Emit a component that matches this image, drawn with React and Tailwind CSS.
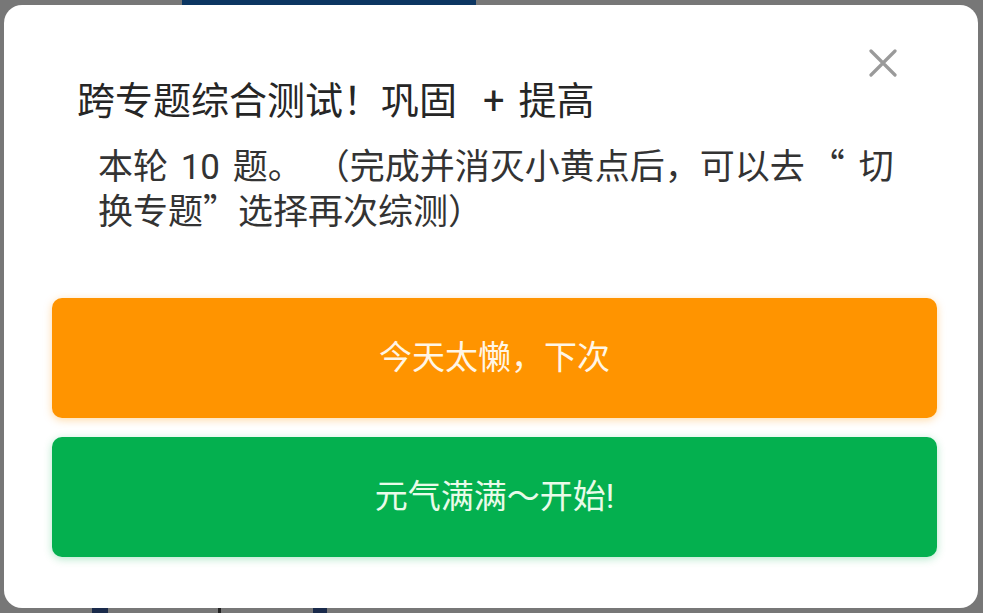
const cjk = "font-['Noto_Sans_CJK_SC',sans-serif] leading-[0]";

export default function App() {
  return (
    <div className="relative w-[983px] h-[613px] overflow-hidden bg-[#777777] font-['Roboto','Noto_Sans_CJK_SC',sans-serif] [text-spacing-trim:space-all]">
      {/* page underneath the dimmed overlay */}
      <div className="flex h-[5px]">
        <div className="w-[182px]" />
        <div className="w-[294px] bg-[#0c3662]" />
      </div>
      <div className="absolute bottom-0 left-0 flex h-[5px] w-full">
        <div className="w-[92px]" />
        <div className="w-[16px] bg-[#1a2a4a]" />
        <div className="w-[110px]" />
        <div className="w-[3px] bg-[#222]" />
        <div className="w-[92px]" />
        <div className="w-[14px] bg-[#1a2a4a]" />
      </div>

      {/* dialog */}
      <div className="absolute left-[4px] top-[5px] w-[974px] h-[603px] rounded-[18px] bg-white">
        <button className="absolute left-[865px] top-[44px] w-[28px] h-[28px] text-[#9a9a9a]">
          <svg viewBox="0 0 28 28" className="w-full h-full" fill="none" stroke="currentColor" strokeWidth="3.2" strokeLinecap="round">
            <path d="M2 2 L26 26 M26 2 L2 26" />
          </svg>
        </button>

        <div className="pt-[72px] pl-[73px] text-[38px] leading-[49px] text-[#262626]">
          跨专题综合测试！巩固<span className="ml-[26px] mr-[14px]">+</span>提高
        </div>
        <p className="mt-[19px] pl-[94px] pr-[70px] text-[35px] leading-[45px] text-[#333] [word-spacing:4px]">
          本轮 10 题。<span className="ml-[12px]">（</span>完成并消灭小黄点后，可以去<span className={`${cjk} ml-[5px] mr-[14px]`}>“</span>切换专题<span className={cjk}>”</span>选择再次综测）
        </p>

        <div className="mt-[63px] ml-[48px] mr-[41px] flex flex-col gap-[19px]">
          <button className="h-[120px] rounded-[10px] bg-[#ff9400] text-[33px] text-[#fff6e6] shadow-[0_2px_8px_rgba(255,148,0,0.35)]">
            今天太懒，下次
          </button>
          <button className="h-[120px] rounded-[10px] bg-[#04b04f] text-[33px] text-[#e9fbe9] shadow-[0_2px_8px_rgba(4,176,79,0.3)]">
            元气满满～开始!
          </button>
        </div>
      </div>
    </div>
  );
}
